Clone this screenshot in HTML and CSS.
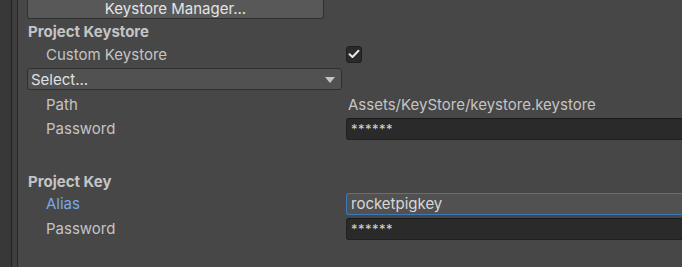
FILE: index.html
```html
<!DOCTYPE html>
<html>
<head>
<meta charset="utf-8">
<link rel="stylesheet" href="styles.css">
</head>
<body>
<div class="window">
  <div class="sidebar"></div>
  <div class="gutter"></div>
  <div class="content">
    <div class="btn-row"><div class="button">Keystore Manager...</div></div>
    <div class="heading h-first">Project Keystore</div>
    <div class="row r-check">
      <div class="label">Custom Keystore</div>
      <div class="value"><div class="checkbox"><svg width="12" height="10" viewBox="0 0 12 10"><path d="M1.5 5.2 L4.5 8 L10.5 1.8" fill="none" stroke="#e6e6e6" stroke-width="2" stroke-linecap="round" stroke-linejoin="round"/></svg></div></div>
    </div>
    <div class="select-row"><div class="select"><span>Select...</span><svg class="arrow" width="10" height="6" viewBox="0 0 10 6"><path d="M0 0 H10 L5 6 Z" fill="#c4c4c4"/></svg></div></div>
    <div class="row r-path">
      <div class="label">Path</div>
      <div class="value plain">Assets/KeyStore/keystore.keystore</div>
    </div>
    <div class="row r-field">
      <div class="label">Password</div>
      <div class="value"><div class="field pwd">******</div></div>
    </div>
    <div class="heading h-second">Project Key</div>
    <div class="row r-field">
      <div class="label focus-label">Alias</div>
      <div class="value"><div class="field focused">rocketpigkey</div></div>
    </div>
    <div class="row r-field r-tight">
      <div class="label">Password</div>
      <div class="value"><div class="field pwd">******</div></div>
    </div>
  </div>
</div>
</body>
</html>
```
FILE: styles.css
```css
html, body {
  margin: 0;
  padding: 0;
  background: #474747;
  overflow: hidden;
}
.window {
  display: flex;
  width: 682px;
  height: 267px;
  font-family: Inter, "Noto Sans", sans-serif;
  font-size: 15px;
  color: #c4c4c4;
}
.sidebar {
  width: 11px;
  background: #383838;
  border-right: 1px solid #232323;
  flex: none;
}
.gutter {
  width: 5px;
  background: #3e3e3e;
  border-right: 1px solid #2a2a2a;
  flex: none;
}
.content {
  flex: 1;
  display: flex;
  flex-direction: column;
  padding-left: 9px;
  min-width: 0;
}
.btn-row {
  display: flex;
  margin-top: -2px;
}
.button {
  width: 297px;
  height: 21px;
  box-sizing: border-box;
  background: #585858;
  border: 1px solid #303030;
  border-top-color: #3a3a3a;
  border-radius: 3px;
  text-align: center;
  line-height: 19px;
  color: #e4e4e4;
}
.heading {
  font-weight: 700;
  padding-left: 1px;
  height: 20px;
  line-height: 20px;
}
.h-first { margin-top: 3px; }
.h-second { margin-top: 32px; }
.row {
  display: flex;
  align-items: center;
}
.label {
  width: 319px;
  box-sizing: border-box;
  padding-left: 19px;
  flex: none;
}
.focus-label { color: #7aa7ea; }
.value {
  flex: 1;
  min-width: 0;
}
.r-check { height: 22px; margin-top: 1px; }
.checkbox {
  width: 16px;
  height: 17px;
  box-sizing: border-box;
  background: #2a2a2a;
  border: 1px solid #1f1f1f;
  border-radius: 3px;
  display: flex;
  align-items: center;
  justify-content: center;
}
.select-row { display: flex; margin-top: 3px; }
.select {
  width: 315px;
  height: 22px;
  box-sizing: border-box;
  background: #515151;
  border: 1px solid #2f2f2f;
  border-radius: 3px;
  display: flex;
  align-items: center;
  justify-content: space-between;
  padding: 0 6px 0 3px;
  color: #e0e0e0;
}
.arrow { margin-top: 1px; }
.r-path { height: 26px; margin-top: 1px; }
.plain { padding-left: 2px; }
.r-field { height: 23px; }
.r-tight { margin-top: 2px; }
.field {
  height: 22px;
  box-sizing: border-box;
  background: #2a2a2a;
  border: 1px solid #212121;
  border-top-color: #1a1a1a;
  border-right: none;
  border-radius: 3px 0 0 3px;
  padding-left: 4px;
  line-height: 20px;
  color: #d2d2d2;
  white-space: nowrap;
}
.pwd { font-size: 13px; letter-spacing: 0.5px; }
.focused {
  background: #515151;
  border: 1px solid #3a79bb;
  border-right: none;
  color: #d8d8d8;
}
```
